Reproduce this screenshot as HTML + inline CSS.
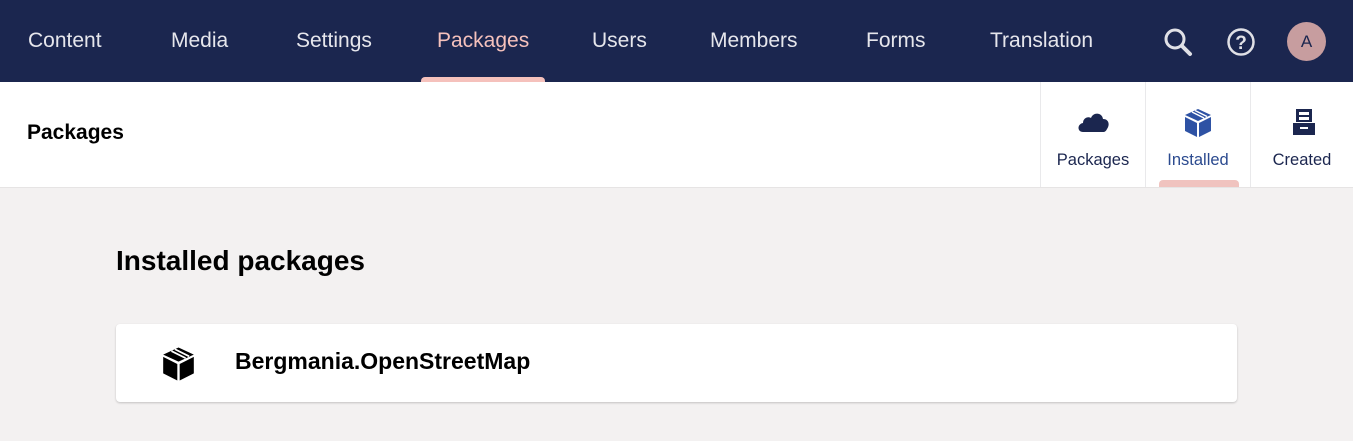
<!DOCTYPE html>
<html><head><style>
*{margin:0;padding:0;box-sizing:border-box}
body{width:1353px;height:441px;background:#f3f1f1;font-family:"Liberation Sans",sans-serif;overflow:hidden;position:relative}
.top{position:absolute;left:0;top:0;width:1353px;height:82px;background:#1b264f}
.nav{position:absolute;top:29px;font-size:21px;color:#e6e6ec;white-space:nowrap}
.act{color:#f5c1bc}
.ul{position:absolute;left:421px;top:77px;width:124px;height:6px;background:#f5c1bc;border-radius:4px 4px 0 0}
.sub{position:absolute;left:0;top:82px;width:1353px;height:106px;background:#fff;border-bottom:1px solid #e6e4e4}
.tab{position:absolute;top:82px;height:105px;border-left:1px solid #e9e9eb;text-align:center}
.tab span{position:absolute;left:0;right:0;top:69px;font-size:16.5px;color:#1b264f}
.card{position:absolute;left:116px;top:324px;width:1121px;height:78px;background:#fff;border-radius:4px;box-shadow:0 1px 2px rgba(0,0,0,.2)}
</style></head><body>
<div class="top"></div>
<div class="nav" style="left:28px">Content</div>
<div class="nav" style="left:171px">Media</div>
<div class="nav" style="left:296px">Settings</div>
<div class="nav act" style="left:437px">Packages</div>
<div class="nav" style="left:592px">Users</div>
<div class="nav" style="left:710px">Members</div>
<div class="nav" style="left:866px">Forms</div>
<div class="nav" style="left:990px">Translation</div>
<div class="ul"></div>
<svg style="position:absolute;left:1162px;top:26px" width="32" height="32" viewBox="0 0 32 32"><circle cx="13" cy="13" r="9" fill="none" stroke="#e0e0e6" stroke-width="3"/><line x1="20" y1="20" x2="28" y2="28" stroke="#e0e0e6" stroke-width="4" stroke-linecap="round"/></svg>
<svg style="position:absolute;left:1226px;top:27px" width="30" height="30" viewBox="0 0 30 30"><circle cx="15" cy="15" r="12.5" fill="none" stroke="#e0e0e6" stroke-width="2.5"/><text x="15" y="22" text-anchor="middle" font-family="Liberation Sans" font-weight="bold" font-size="19" fill="#e0e0e6">?</text></svg>
<div style="position:absolute;left:1287px;top:22px;width:39px;height:39px;border-radius:50%;background:#c79d9f;color:#1b264f;font-size:17px;text-align:center;line-height:39px">A</div>
<div class="sub"></div>
<div style="position:absolute;left:27px;top:121px;font-size:21px;font-weight:bold;color:#000">Packages</div>
<div class="tab" style="left:1040px;width:105px">
<svg style="position:absolute;left:36px;top:29px" width="33" height="22" viewBox="0 0 33 22"><path d="M6 21 C0 21 0 13 6 12 C6 7 11 5 14 7 C16 1 25 1 26 8 C32 8 33 14 30 18 C29 20 28 21 26 21 Z" fill="#1b264f"/></svg>
<span>Packages</span></div>
<div class="tab" style="left:1145px;width:105px">
<svg style="position:absolute;left:38px;top:26px" width="28" height="30" viewBox="0 0 28 30"><path d="M14 1 L27 7 L14 13 L1 7Z" fill="#2e52a4"/><path d="M1 9 L13 15 L13 29 L1 23Z" fill="#2e52a4"/><path d="M27 9 L15 15 L15 29 L27 23Z" fill="#2e52a4"/><path d="M8 4 L20 10 M11 2.5 L23 8.5" stroke="#fff" stroke-width="1.5"/></svg>
<span style="color:#2b4a8f">Installed</span>
<div style="position:absolute;left:13px;top:98px;width:80px;height:7px;background:#f0c3bf;border-radius:4px 4px 0 0"></div></div>
<div class="tab" style="left:1250px;width:103px">
<svg style="position:absolute;left:41px;top:26px" width="24" height="28" viewBox="0 0 24 28"><path d="M4 1 H20 V14 H4Z M7 4 V7 H17 V4Z M7 9 V12 H17 V9Z" fill="#1b264f" fill-rule="evenodd"/><path d="M1 15 H23 V27 H1Z M8 19 V21 H16 V19Z" fill="#1b264f" fill-rule="evenodd"/></svg>
<span>Created</span></div>
<div style="position:absolute;left:116px;top:245px;font-size:28px;font-weight:bold;color:#000">Installed packages</div>
<div class="card">
<svg style="position:absolute;left:46px;top:22px" width="33" height="36" viewBox="0 0 28 30"><path d="M14 1 L27 7 L14 13 L1 7Z" fill="#000"/><path d="M1 9 L13 15 L13 29 L1 23Z" fill="#000"/><path d="M27 9 L15 15 L15 29 L27 23Z" fill="#000"/><path d="M8 4 L20 10 M11 2.5 L23 8.5" stroke="#fff" stroke-width="1.5"/></svg>
<div style="position:absolute;left:119px;top:24px;font-size:23px;font-weight:bold;color:#000">Bergmania.OpenStreetMap</div>
</div>
</body></html>
